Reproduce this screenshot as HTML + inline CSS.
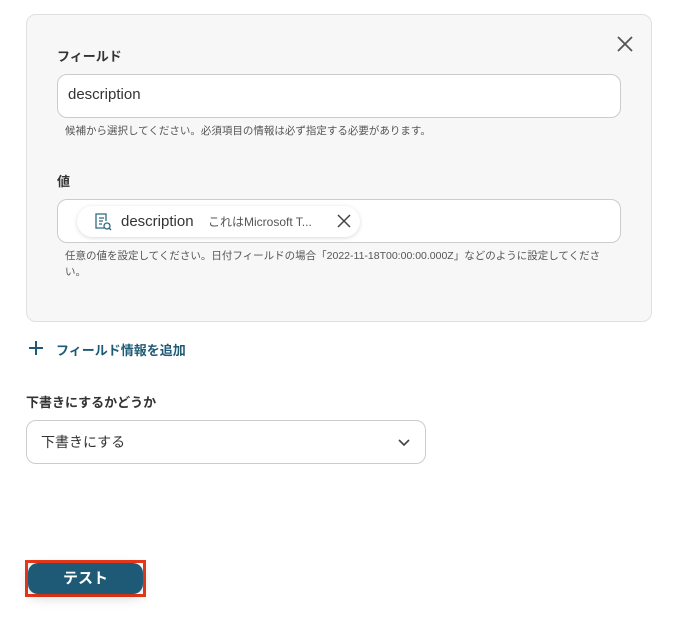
<!DOCTYPE html>
<html><head><meta charset="utf-8"><style>
*{box-sizing:border-box;margin:0;padding:0}
body{width:685px;height:629px;background:#fff;font-family:"Liberation Sans","Noto Sans CJK JP",sans-serif;color:#333;position:relative;overflow:hidden}
.panel{position:absolute;left:26px;top:14px;width:626px;height:308px;background:#f7f7f7;border:1px solid #e0e0e0;border-radius:10px}
.abs{position:absolute}
.lbl{font-size:14px;font-weight:bold;color:#333}
.inp{position:absolute;background:#fff;border:1px solid #ccc;border-radius:10px}
.hint{font-size:10.5px;color:#555}
</style></head><body>
<div class="panel"></div>
<svg class="abs" style="left:616px;top:35px" width="18" height="18" viewBox="0 0 18 18"><path d="M2 2L16 16M16 2L2 16" stroke="#555" stroke-width="1.8"/></svg>
<div class="abs lbl" style="left:57px;top:46px;font-size:13px">フィールド</div>
<div class="inp" style="left:57px;top:74px;width:564px;height:44px"></div>
<div class="abs" style="left:68px;top:86px;font-size:15px;color:#333">description</div>
<div class="abs hint" style="left:65px;top:123px">候補から選択してください。必須項目の情報は必ず指定する必要があります。</div>
<div class="abs lbl" style="left:57px;top:171px;font-size:13px">値</div>
<div class="inp" style="left:57px;top:199px;width:564px;height:44px"></div>
<div class="abs" style="left:77px;top:206px;width:283px;height:31px;background:#fff;border-radius:16px;box-shadow:0 1px 4px rgba(0,0,0,.15)"></div>
<svg class="abs" style="left:93px;top:212px" width="20" height="20" viewBox="0 0 20 20"><path d="M11 16H3V2h10v7M6 6h5M6 9h4M6 12h3" stroke="#2d6a80" stroke-width="1.3" fill="none"/><circle cx="14" cy="14" r="3" stroke="#2d6a80" stroke-width="1.3" fill="none"/><path d="M16 16l2 2" stroke="#2d6a80" stroke-width="1.3"/></svg>
<div class="abs" style="left:121px;top:213px;font-size:15px;color:#333">description</div>
<div class="abs" style="left:208px;top:213px;font-size:12px;color:#555">これはMicrosoft T...</div>
<svg class="abs" style="left:337px;top:214px" width="14" height="14" viewBox="0 0 14 14"><path d="M1 1L13 13M13 1L1 13" stroke="#444" stroke-width="1.5"/></svg>
<div class="abs hint" style="left:65px;top:248px;width:538px;line-height:16px">任意の値を設定してください。日付フィールドの場合「2022-11-18T00:00:00.000Z」などのように設定してください。</div>
<svg class="abs" style="left:28px;top:340px" width="16" height="16" viewBox="0 0 16 16"><path d="M8 1v14M1 8h14" stroke="#1e5a75" stroke-width="2"/></svg>
<div class="abs" style="left:56px;top:340px;font-size:13px;font-weight:bold;color:#1e5a75">フィールド情報を追加</div>
<div class="abs lbl" style="left:26px;top:392px;font-size:13px">下書きにするかどうか</div>
<div class="inp" style="left:26px;top:420px;width:400px;height:44px"></div>
<div class="abs" style="left:41px;top:432px;font-size:14px">下書きにする</div>
<svg class="abs" style="left:398px;top:437px" width="12" height="10" viewBox="0 0 12 10"><path d="M1 3l5 5 5-5" stroke="#444" stroke-width="1.6" fill="none"/></svg>
<div class="abs" style="left:25px;top:560px;width:121px;height:37px;border:3px solid #e8381a"></div>
<div class="abs" style="left:28px;top:563px;width:115px;height:31px;background:#1e5a75;border-radius:10px;box-shadow:0 4px 12px rgba(0,0,0,.15);color:#fff;font-size:15px;font-weight:bold;text-align:center;line-height:31px">テスト</div>
</body></html>
